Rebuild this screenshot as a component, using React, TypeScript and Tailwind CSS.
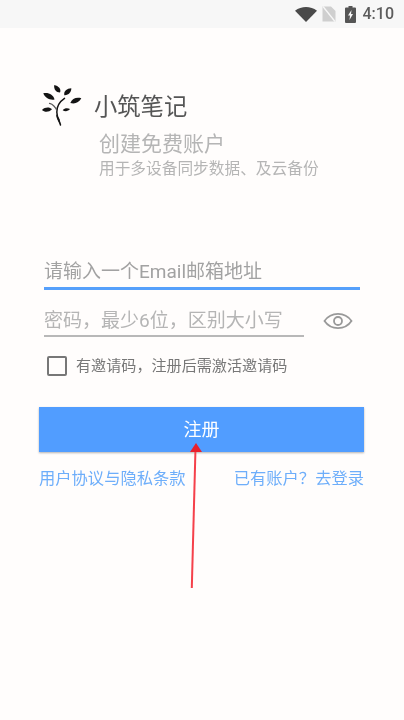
import React from "react";

const cjk = "font-['Roboto','Noto_Sans_CJK_SC',sans-serif]";

const StatusBar: React.FC = () => (
    <div className="h-[28px] bg-[#f7f7f7] flex items-center justify-end pr-[10px] text-[#5c5c5c]">
        <svg width="22" height="15" viewBox="0 0 22 15" className="mr-[5px]">
            <path d="M0 3.800C6.500 -1.200 15.500 -1.200 22 3.800L11 15Z" fill="#4a4a4a" />
        </svg>
        <svg width="14" height="16" viewBox="0 0 14 16" className="mr-[9px]">
            <path d="M0.500 0.500h8.500l4.500 4.500v10.500H0.500Z" fill="#cfcfcf" />
            <path d="M1 0.500l12 15" stroke="#f7f7f7" strokeWidth="1.300" />
        </svg>
        <svg width="11" height="17" viewBox="0 0 11 17" className="mr-[7px]">
            <path d="M3.500 0h4v1.500h2.500a1 1 0 011 1v13.500a1 1 0 01-1 1H1a1 1 0 01-1-1V2.500a1 1 0 011-1h2.500Z" fill="#555" />
            <path d="M6.500 4L3 9.500h2L4.500 14l3.500-6H6Z" fill="#f7f7f7" />
        </svg>
        <span className="text-[16px] font-medium font-['Roboto',sans-serif] leading-none">4:10</span>
    </div>
);

const Logo: React.FC = () => (
    <svg width="42" height="42" viewBox="0 0 42 42" className="shrink-0" fill="#141414">
        {/* leaves */}
        <path d="M13.300 1C17.500 2 20.500 5 19 8.500C15 8.500 12.500 5 13.300 1Z" />
        <path d="M23.300 11.200C22.500 7 26 4.500 30.300 4.300C30.500 8 27.500 11.500 23.300 11.200Z" />
        <path d="M29.300 19C31 14.500 35.500 13 40.300 14.300C38 18.500 34 20.500 29.300 19Z" />
        <path d="M2.300 9.300C7 8 12.500 10.500 13.500 15.500C9 16.500 4 14 2.300 9.300Z" />
        <path d="M1 26C4 23 8.500 22.800 11 25.300C8 28.500 3.500 28.500 1 26Z" />
        <path d="M21.700 26.200C23.500 24 26.500 23.700 29 25C27 27.500 24 27.700 21.700 26.200Z" />
        {/* trunk and branches */}
        <path d="M19.500 41C18.500 37 15.800 33 15.800 28C15.800 24 18 18 23.500 14.300" fill="none" stroke="#141414" strokeWidth="1.500" strokeLinecap="round" />
        <path d="M8.500 19.300C11.500 20 14.500 23 16 27" fill="none" stroke="#555" strokeWidth="1.200" strokeLinecap="round" />
        <path d="M19.800 41.500C17.500 38 15 34 15 30L18.500 35Z" />
    </svg>
);

export default function App() {
    return (
        <div className={`relative w-[404px] h-[720px] overflow-hidden bg-[#fffdfc] blur-[0.5px] ${cjk}`}>
            <StatusBar />

            <div className="pl-[41px] pt-[56px] flex items-center">
                <Logo />
                <span className="ml-[11px] text-[23.300px] leading-[30px] text-[#555555] mt-[3px]">小筑笔记</span>
            </div>
            <div className="pl-[99px] mt-[4px] text-[21px] leading-[28px] text-[#b5b5b5]">创建免费账户</div>
            <div className="pl-[99px] mt-[1px] text-[15.700px] leading-[20px] text-[#b5b5b5]">用于多设备同步数据、及云备份</div>

            <div className="ml-[44px] mt-[77px] w-[316px] h-[34px] border-b-[3px] border-[#56a0fb] text-[19px] leading-[32px] text-[#a2a2a2]">
                请输入一个Email邮箱地址
            </div>

            <div className="ml-[44px] mt-[17px] flex items-start">
                <div className="w-[260px] h-[30px] border-b-2 border-[#b8b8b8] text-[19px] leading-[28px] text-[#b5b5b5] whitespace-nowrap">
                    密码，最少6位，区别大小写
                </div>
                <svg width="30" height="20" viewBox="0 0 30 20" className="ml-[19px] mt-[4px]" fill="none" stroke="#999999" strokeWidth="1.800">
                    <path d="M1.500 10C8 0.500 22 0.500 28.500 10C22 19.500 8 19.500 1.500 10Z" />
                    <circle cx="15" cy="10" r="4" />
                </svg>
            </div>

            <div className="ml-[47px] mt-[19px] flex items-center">
                <div className="w-[20px] h-[20px] rounded-[2px] border-2 border-[#777777]" />
                <span className="ml-[9px] text-[15.100px] leading-[20px] text-[#777777] whitespace-nowrap">有邀请码，注册后需激活邀请码</span>
            </div>

            <div className="ml-[39px] mt-[31px] w-[325px] h-[45px] bg-[#519dff] shadow-[0_1px_2px_rgba(0,0,0,0.3)] flex items-center justify-center text-[18px] text-white">
                注册
            </div>

            <div className="ml-[39px] mt-[16px] w-[325px] flex justify-between text-[16.300px] leading-[22px] text-[#6eaefa]">
                <span>用户协议与隐私条款</span>
                <span>已有账户？去登录</span>
            </div>

            {/* red annotation arrow over the button */}
            <svg width="24" height="150" viewBox="0 0 24 150" className="absolute left-[183px] top-[442px]">
                <path d="M8.800 146L12.500 6" stroke="#f5404a" strokeWidth="2" fill="none" />
                <path d="M13 1L19 10H7Z" fill="#e8202c" />
            </svg>
        </div>
    );
}
